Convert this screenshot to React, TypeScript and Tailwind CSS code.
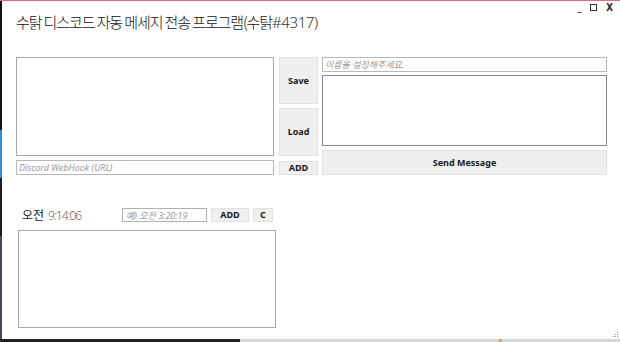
import React from "react";

const btn =
  "flex items-center justify-center bg-[#efefef] border border-[#e2e2e2] text-[9px] font-bold text-[#1a1a1a] font-['Noto_Sans',sans-serif]";
const ph =
  "text-[9px] italic text-[#9a9a9a] font-['Noto_Sans','Noto_Sans_CJK_KR',sans-serif] leading-none";

export default function App() {
  return (
    <div className="relative w-[620px] h-[342px] overflow-hidden bg-white flex flex-col">
      <div className="h-[1px] bg-[#e36a8a]" />
      <div className="flex flex-1 min-h-0">
        <div className="w-[2px] flex flex-col">
          <div className="h-[129px] bg-[#121212]" />
          <div className="h-[48px] bg-[#2f8fd3]" />
          <div className="h-[58px] bg-[#1b1b1d]" />
          <div className="flex-1 bg-[#4a4756]" />
        </div>
        <div className="relative flex-1 flex flex-col">
          <div className="h-[56px] flex justify-between items-start">
            <div className="pl-[14px] pt-[10px] text-[15px] font-light text-[#111] font-['Noto_Sans_CJK_KR',sans-serif] tracking-[-1.1px]">
              수탉 디스코드 자동 메세지 전송 프로그램(수탉
              <span className="font-['Noto_Sans',sans-serif] font-light tracking-[-0.4px] text-[#333]">#4317)</span>
            </div>
            <div className="flex items-center gap-[9px] pr-[7px] pt-[1px] text-[10px] text-[#222] font-['Noto_Sans',sans-serif] leading-none">
              <span className="font-bold">_</span>
              <span className="w-[7px] h-[7px] border border-[#333]" />
              <span className="font-bold">X</span>
            </div>
          </div>
          <div className="flex pl-[14px]">
            <div className="w-[258px] flex flex-col">
              <div className="h-[99px] border border-[#a9a9a9] bg-white" />
              <div className="mt-[4px] h-[15px] border border-[#b8b8b8] flex items-center pl-[2px]">
                <span className={ph}>Discord WebHook (URL)</span>
              </div>
            </div>
            <div className="ml-[5px] w-[39px] flex flex-col">
              <div className={btn + " h-[47px]"}>Save</div>
              <div className={btn + " mt-[4px] h-[48px]"}>Load</div>
              <div className={btn + " mt-[5px] h-[14px]"}>ADD</div>
            </div>
            <div className="ml-[4px] w-[285px] flex flex-col">
              <div className="h-[15px] border border-[#b8b8b8] flex items-center pl-[2px]">
                <span className={ph}>이름을 설정해주세요.</span>
              </div>
              <div className="mt-[3px] h-[71px] border border-[#8a8a8a] bg-white" />
              <div className={btn + " mt-[4px] h-[25px]"}>Send Message</div>
            </div>
          </div>
          <div className="mt-[33px] flex items-center h-[14px]">
            <div className="pl-[20px] w-[120px] flex items-baseline leading-none">
              <span className="text-[12px] text-[#222] font-['Noto_Sans_CJK_KR',sans-serif]">오전</span>
              <span className="ml-[4px] text-[12px] font-light text-[#666] tracking-[-1px] font-['Noto_Sans',sans-serif]">9:14:06</span>
            </div>
            <div className="w-[85px] h-[14px] border border-[#b0b0b0] flex items-center pl-[3px]">
              <span className={ph + " text-[8px]"}>예) 오전 3:20:19</span>
            </div>
            <div className={btn + " ml-[4px] w-[38px] h-[14px] text-[8px]"}>ADD</div>
            <div className={btn + " ml-[4px] w-[20px] h-[14px] text-[8px]"}>C</div>
          </div>
          <div className="ml-[16px] mt-[8px] w-[258px] h-[98px] border border-[#a9a9a9]" />
          <div className="absolute right-[2px] bottom-[2px] grid grid-cols-3 gap-[1px]">
            <span />
            <span />
            <span className="w-[1px] h-[1px] bg-[#999]" />
            <span />
            <span className="w-[1px] h-[1px] bg-[#999]" />
            <span className="w-[1px] h-[1px] bg-[#999]" />
            <span className="w-[1px] h-[1px] bg-[#999]" />
            <span className="w-[1px] h-[1px] bg-[#999]" />
            <span className="w-[1px] h-[1px] bg-[#999]" />
          </div>
        </div>
      </div>
      <div className="h-[3px] flex">
        <div className="w-[240px] bg-[#23232b]" />
        <div className="flex-1 bg-[#d6d9dc] flex">
          <div className="ml-[259px] w-[3px] bg-[#e8a317]" />
        </div>
      </div>
    </div>
  );
}
